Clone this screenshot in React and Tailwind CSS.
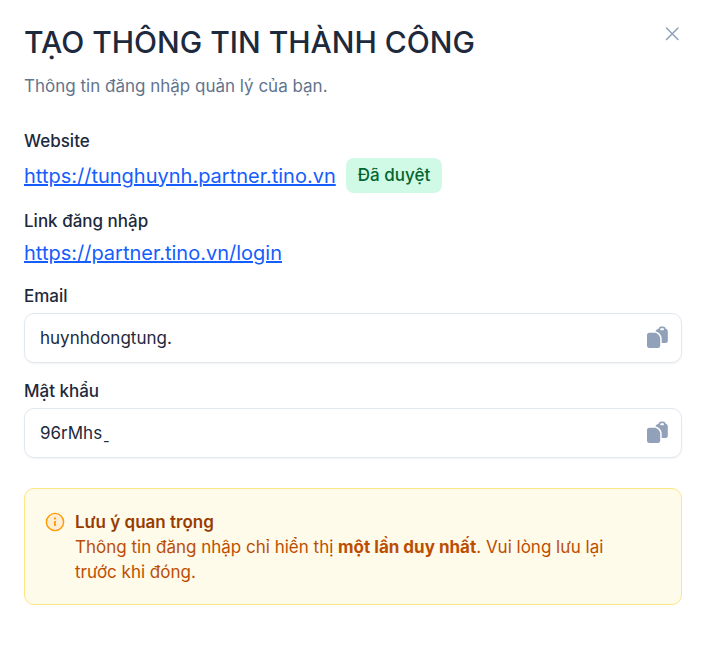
import { useState } from 'react'

function CloseIcon() {
  return (
    <svg viewBox="0 0 20 20" className="size-5" fill="none" stroke="currentColor" strokeWidth="1.5" strokeLinecap="round" aria-hidden="true">
      <path d="M4.5 4l11.5 11.5M16 4L4.5 15.5" />
    </svg>
  )
}

function CopyIcon() {
  return (
    <svg viewBox="0 0 24 24" className="size-6" fill="currentColor" aria-hidden="true">
      <path d="M4.200 6.800h6C13 7.700 14.600 9.600 15.200 12.200v7.600c0 1.200-1 2.200-2.200 2.200H4.200C3 22 2 21 2 19.800V9c0-1.200 1-2.200 2.200-2.200Z" />
      <path
        fillRule="evenodd"
        d="M10.400 5.200c.5-1.300 1.500-2.200 3-2.300C13.800 1.400 14.800.5 16.200.5h1.700c1.400 0 2.500.9 2.800 2.300 1.300.3 2.100 1.300 2.100 2.700v9.200c0 1.300-1 2.300-2.300 2.300h-3.800v-4.900c-.4-3.300-2.600-6-6.300-6.900ZM15.200 3.300c0 .7.3 1 .9 1h2c.6 0 .9-.3.9-1s-.3-1-.9-1h-2c-.6 0-.9.3-.9 1Z"
      />
    </svg>
  )
}

function InfoIcon() {
  return (
    <svg viewBox="0 0 20 20" className="mt-[2px] size-5 shrink-0 text-amber-500" fill="none" aria-hidden="true">
      <circle cx="10" cy="10" r="8.6" stroke="currentColor" strokeWidth="1.4" className="fill-orange-100" />
      <path d="M10 9v5" stroke="currentColor" strokeWidth="1.8" />
      <path d="M10 5.600v1.800" stroke="currentColor" strokeWidth="1.8" />
    </svg>
  )
}

function CopyField({ id, label, value }) {
  return (
    <div className="flex flex-col gap-1">
      <label htmlFor={id} className="text-[17px] leading-[25px] font-medium text-slate-800">{label}</label>
      <div className="flex h-[50px] items-center rounded-[10px] border border-slate-200 bg-white pr-3 pl-[15px] shadow-xs">
        <input
          id={id}
          type="text"
          readOnly
          value={value}
          className="min-w-0 flex-1 bg-transparent pt-px text-[17px] text-slate-800 focus:outline-none"
        />
        <button
          type="button"
          aria-label={`Sao chép ${label}`}
          onClick={() => navigator.clipboard?.writeText(value)}
          className="text-slate-400 hover:text-slate-500"
        >
          <CopyIcon />
        </button>
      </div>
    </div>
  )
}

export default function App() {
  const [open, setOpen] = useState(true)

  if (!open) return null

  return (
    <div className="min-h-screen bg-white pt-5 pr-[25px] pl-6 font-['Inter',sans-serif]">
      <header className="flex items-start justify-between">
        <div>
          <h1 className="text-3xl leading-11 font-medium text-slate-800">TẠO THÔNG TIN THÀNH CÔNG</h1>
          <p className="mt-[10px] text-[17px] leading-[25px] text-slate-500">Thông tin đăng nhập quản lý của bạn.</p>
        </div>
        <button type="button" aria-label="Đóng" onClick={() => setOpen(false)} className="mt-1 text-slate-400">
          <CloseIcon />
        </button>
      </header>

      <main className="mt-[30px] flex flex-col gap-4">
        <section>
          <h2 className="text-[17px] leading-[25px] font-medium text-slate-800">Website</h2>
          <div className="mt-1 flex items-center gap-[10px]">
            <a href="https://tunghuynh.partner.tino.vn" className="text-xl leading-[30px] text-blue-600 underline">https://tunghuynh.partner.tino.vn</a>
            <span className="rounded-lg bg-emerald-100 px-3 py-[5px] text-[17px] leading-[25px] font-medium text-green-800">Đã duyệt</span>
          </div>
        </section>

        <section>
          <h2 className="text-[17px] leading-[25px] font-medium text-slate-800">Link đăng nhập</h2>
          <a href="https://partner.tino.vn/login" className="mt-1 block w-fit text-xl leading-[30px] text-blue-600 underline">https://partner.tino.vn/login</a>
        </section>

        <CopyField id="email" label="Email" value="huynhdongtung." />
        <CopyField id="password" label="Mật khẩu" value="96rMhsˍ" />
      </main>

      <aside className="mt-[30px] flex gap-[10px] rounded-[10px] border border-amber-200 bg-amber-50 px-5 pt-[21px] pb-[19px]">
        <InfoIcon />
        <div className="pr-10 text-[17px] leading-[25px] text-amber-700">
          <h3 className="font-semibold text-amber-800">Lưu ý quan trọng</h3>
          <p>
            Thông tin đăng nhập chỉ hiển thị <strong>một lần duy nhất</strong>. Vui lòng lưu lại trước khi đóng.
          </p>
        </div>
      </aside>
    </div>
  )
}
